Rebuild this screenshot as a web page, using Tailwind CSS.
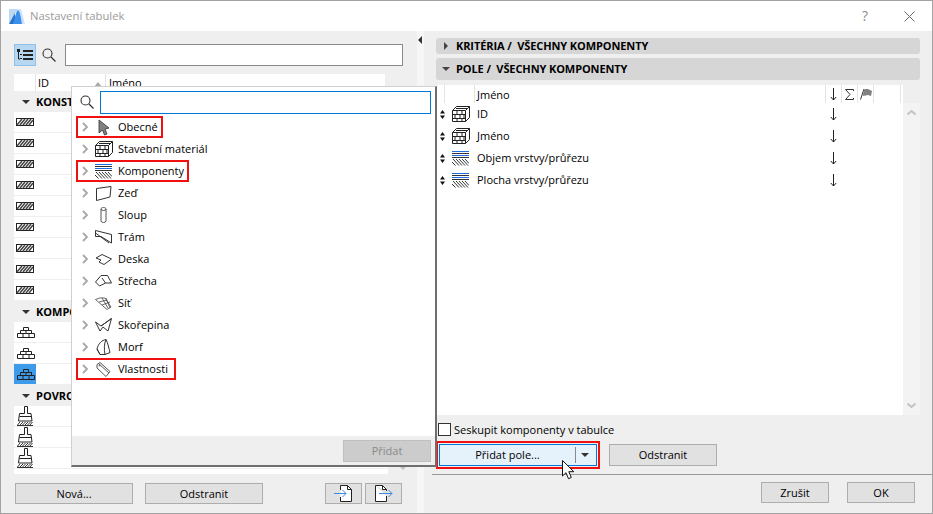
<!DOCTYPE html>
<html lang="cs">
<head>
<meta charset="utf-8">
<title>Nastavení tabulek</title>
<script src="https://cdn.jsdelivr.net/npm/@tailwindcss/browser@4"></script>
</head>
<body class="m-0">
<svg width="0" height="0" class="absolute">
  <defs>
    <symbol id="hatch" viewBox="0 0 18 8">
      <rect x="0.5" y="0.5" width="17" height="7" fill="#fff" stroke="#222"/>
      <path d="M1 7L6 1M4 7L9 1M7 7L12 1M10 7L15 1M13 7L17 2" stroke="#444" stroke-width="1.500" fill="none"/>
    </symbol>
    <symbol id="bricks" viewBox="0 0 18 11">
      <path d="M6.500.500h5v3h-5zM3.500 3.500h11v3h-11zM9 3.500v3M.5 6.500h17v4H.5zM6 6.500v4M12 6.500v4" fill="none" stroke="#222"/>
    </symbol>
    <symbol id="brush" viewBox="0 0 16 20">
      <path d="M7.500.500h3v7h3.500l1 7.500H1.500l1-7.500h5z" fill="#fff" stroke="#222"/>
      <path d="M2.500 10.500h12" stroke="#222"/>
      <path d="M.5 19L3 16M3 19l3-3M5.500 19l3-3M8 19l3-3M10.500 19l3-3M13 19l2.500-3" stroke="#333"/>
      <path d="M0 19.500h16" stroke="#333"/>
    </symbol>
    <symbol id="cube" viewBox="0 0 18 16">
      <path d="M.5 4.500h13v11H.5zM.5 4.500l4-4h13v11l-4 4M13.500 4.500l4-4" fill="#fff" stroke="#222"/>
      <path d="M.5 8.500h13M.5 12.500h13M5 4.500v4M10 4.500v4M3 8.500v4M8 8.500v4M12 8.500v4M5 12.500v3M10 12.500v3M4 2.500h11" stroke="#222" fill="none"/>
    </symbol>
    <symbol id="layers" viewBox="0 0 17 15">
      <path d="M0 .5h17M0 4.500h17" stroke="#1f6be0"/>
      <path d="M0 2.500h17M0 6.500h17" stroke="#333"/>
      <path d="M1 8l6 6.500M4 8l6 6.500M7 8l6 6.500M10 8l6 6.500M13 8l4 4.500M0 11l3.500 3.500" stroke="#333" fill="none"/>
    </symbol>
    <symbol id="chev" viewBox="0 0 7 10">
      <path d="M1 1l4 4-4 4" fill="none" stroke="#a8a8a8" stroke-width="1.800"/>
    </symbol>
    <symbol id="mag" viewBox="0 0 14 14">
      <circle cx="5.500" cy="5.500" r="4.500" fill="none" stroke="#333" stroke-width="1.100"/>
      <path d="M9 9l4.500 4.500" stroke="#333" stroke-width="1.300"/>
    </symbol>
    <symbol id="updown" viewBox="0 0 5 9">
      <path d="M2.500 0L5 3.500H0zM2.500 9L0 5.500h5z" fill="#111"/>
    </symbol>
    <symbol id="down" viewBox="0 0 7 13">
      <path d="M3.500 0v12M.8 9l2.700 3 2.700-3" fill="none" stroke="#222"/>
    </symbol>
  </defs>
</svg>

<div class="w-[933px] h-[514px] overflow-hidden flex flex-col border border-[#a3a3a3] bg-[#efefef] text-[11px] leading-[16px] text-black relative" style="font-family:'Open Sans','Noto Sans',sans-serif">

  <!-- title bar -->
  <div class="h-[30px] shrink-0 bg-white flex items-center">
    <svg class="ml-[8px] w-[16px] h-[16px]" viewBox="0 0 16 16"><path d="M0 1h9L0 16z" fill="#bcd8f5"/><path d="M0 16L6 5v11z" fill="#2a72d0"/><path d="M9 1h3l4 15h-3z" fill="#cfe2f8"/><path d="M4 16C6 10 7 3 9 2c2 1 3 8 4 14z" fill="#3d8fec"/></svg>
    <span class="ml-[5px] w-[97px] text-[#9a9a9a] text-[11.300px]">Nastavení tabulek</span>
    <span class="ml-[735px] text-[#8a8a8a] text-[14px]">?</span>
    <svg class="ml-[36px] w-[11px] h-[11px]" viewBox="0 0 11 11"><path d="M.5.500l10 10M10.500.500l-10 10" stroke="#666" fill="none"/></svg>
  </div>

  <div class="flex-1 flex min-h-0">
    <!-- left column -->
    <div class="w-[416px] shrink-0 pl-[13px] pt-[13px] flex flex-col">
      <div class="flex items-center h-[22px] w-[389px]">
        <div class="w-[22px] h-[22px] bg-[#b5d7f2] border border-[#8fc0e8] flex items-center justify-center">
          <svg class="w-[16px] h-[12px]" viewBox="0 0 16 12"><path d="M0 0h3v3H0zM6 1h10v2H6zM6 5h10v2H6zM6 9h10v2H6zM3 5h2v1H3zM3 9h2v1H3z" fill="#222"/><path d="M1.500 3v7H3" stroke="#222" fill="none"/></svg>
        </div>
        <svg class="ml-[6px] w-[14px] h-[14px]"><use href="#mag"/></svg>
        <div class="ml-[9px] flex-1 h-[22px] bg-white border border-[#8a8a8a]"></div>
      </div>

      <div class="mt-[8px] flex-1 flex min-h-0">
        <div class="w-[374px] flex flex-col">
          <div class="h-[17px] w-[371px] bg-white flex shrink-0 items-center">
            <div class="w-[22px] h-full border-r border-[#e4e4e4]"></div>
            <div class="w-[70px] pl-[2px] h-full border-r border-[#e4e4e4] flex items-center relative">ID<span class="absolute right-[3px] top-[8px] w-0 h-0 border-x-[4px] border-x-transparent border-b-[5px] border-b-[#a8a8a8]"></span></div>
            <div class="pl-[3px]">Jméno</div>
          </div>
          <div class="h-[21px] flex items-center bg-[#efefef] pl-[8px] gap-[6px] font-bold"><span class="w-0 h-0 border-x-[4px] border-x-transparent border-t-[4px] border-t-[#333]"></span>KONST</div>
          <div class="h-[21px] bg-white border-b border-[#efefef] pl-[2px] flex items-center"><svg class="w-[18px] h-[8px]"><use href="#hatch"/></svg></div>
          <div class="h-[21px] bg-white border-b border-[#efefef] pl-[2px] flex items-center"><svg class="w-[18px] h-[8px]"><use href="#hatch"/></svg></div>
          <div class="h-[21px] bg-white border-b border-[#efefef] pl-[2px] flex items-center"><svg class="w-[18px] h-[8px]"><use href="#hatch"/></svg></div>
          <div class="h-[21px] bg-white border-b border-[#efefef] pl-[2px] flex items-center"><svg class="w-[18px] h-[8px]"><use href="#hatch"/></svg></div>
          <div class="h-[21px] bg-white border-b border-[#efefef] pl-[2px] flex items-center"><svg class="w-[18px] h-[8px]"><use href="#hatch"/></svg></div>
          <div class="h-[21px] bg-white border-b border-[#efefef] pl-[2px] flex items-center"><svg class="w-[18px] h-[8px]"><use href="#hatch"/></svg></div>
          <div class="h-[21px] bg-white border-b border-[#efefef] pl-[2px] flex items-center"><svg class="w-[18px] h-[8px]"><use href="#hatch"/></svg></div>
          <div class="h-[21px] bg-white border-b border-[#efefef] pl-[2px] flex items-center"><svg class="w-[18px] h-[8px]"><use href="#hatch"/></svg></div>
          <div class="h-[21px] bg-white border-b border-[#efefef] pl-[2px] flex items-center"><svg class="w-[18px] h-[8px]"><use href="#hatch"/></svg></div>
          <div class="h-[21px] flex items-center bg-[#efefef] pl-[8px] gap-[6px] font-bold"><span class="w-0 h-0 border-x-[4px] border-x-transparent border-t-[4px] border-t-[#333]"></span>KOMPO</div>
          <div class="h-[21px] bg-white border-b border-[#efefef] pl-[3px] flex items-center"><svg class="w-[18px] h-[11px]"><use href="#bricks"/></svg></div>
          <div class="h-[21px] bg-white border-b border-[#efefef] pl-[3px] flex items-center"><svg class="w-[18px] h-[11px]"><use href="#bricks"/></svg></div>
          <div class="h-[21px] bg-white border-b border-[#efefef] flex items-center"><div class="w-[22px] h-[20px] bg-[#3d9be9] pl-[3px] flex items-center"><svg class="w-[18px] h-[11px]"><use href="#bricks"/></svg></div></div>
          <div class="h-[21px] flex items-center bg-[#efefef] pl-[8px] gap-[6px] font-bold"><span class="w-0 h-0 border-x-[4px] border-x-transparent border-t-[4px] border-t-[#333]"></span>POVRC</div>
          <div class="h-[21px] bg-white border-b border-[#efefef] pl-[3px] flex items-center"><svg class="w-[16px] h-[20px]"><use href="#brush"/></svg></div>
          <div class="h-[21px] bg-white border-b border-[#efefef] pl-[3px] flex items-center"><svg class="w-[16px] h-[20px]"><use href="#brush"/></svg></div>
          <div class="h-[21px] bg-white border-b border-[#efefef] pl-[3px] flex items-center"><svg class="w-[16px] h-[20px]"><use href="#brush"/></svg></div>
          <div class="h-[5px] bg-white"></div>
        </div>
        <div class="flex-1 flex flex-col justify-end items-center pb-[4px]">
          <span class="w-0 h-0 border-x-[4px] border-x-transparent border-t-[4px] border-t-[#c4c4c4]"></span>
        </div>
      </div>

      <div class="mt-[9px] mb-[9px] h-[21px] w-[388px] flex shrink-0">
        <button class="ml-[1px] w-[118px] h-[21px] bg-[#e1e1e1] border border-[#adadad]">Nová...</button>
        <button class="ml-[12px] w-[118px] h-[21px] bg-[#e1e1e1] border border-[#adadad]">Odstranit</button>
        <button class="ml-[62px] w-[37px] h-[21px] bg-[#e1e1e1] border border-[#adadad] flex items-center justify-center">
          <svg class="w-[19px] h-[17px]" viewBox="0 0 19 17"><path d="M6.500 5V.500h7l4 4v12h-11V12" fill="#fff" stroke="#222"/><path d="M13.500.500v4h4" fill="none" stroke="#222"/><path d="M0 8.500h12M8.500 5l3.500 3.500L8.500 12" fill="none" stroke="#3c8be0"/></svg>
        </button>
        <button class="ml-[3px] w-[37px] h-[21px] bg-[#e1e1e1] border border-[#adadad] flex items-center justify-center">
          <svg class="w-[19px] h-[17px]" viewBox="0 0 19 17"><path d="M1.500.500h7l4 4V6M12.500 11v5.500h-11V.500" fill="#fff" stroke="#222"/><path d="M8.500.500v4h4" fill="none" stroke="#222"/><path d="M5 8.500h13M14.500 5L18 8.500 14.500 12" fill="none" stroke="#3c8be0"/></svg>
        </button>
      </div>
    </div>

    <!-- splitter -->
    <div class="w-[7px] shrink-0 bg-[#f6f6f6] pt-[5px] pl-[1px]">
      <span class="block w-0 h-0 border-y-[4px] border-y-transparent border-r-[4px] border-r-[#333]"></span>
    </div>

    <!-- right column -->
    <div class="flex-1 min-w-0 pt-[7px] flex flex-col">
      <div class="ml-[12px] mr-[12px] h-[16px] rounded-[3px] bg-[#d6d6d6] flex items-center pl-[8px] gap-[8px] font-bold text-[11px] tracking-[-0.1px]">
        <span class="w-0 h-0 border-y-[4px] border-y-transparent border-l-[4px] border-l-[#444]"></span>KRITÉRIA / &nbsp;VŠECHNY KOMPONENTY
      </div>
      <div class="mt-[4px] ml-[12px] mr-[12px] h-[22px] rounded-[3px] bg-[#d6d6d6] flex items-center pl-[6px] gap-[6px] font-bold text-[11px] tracking-[-0.1px]">
        <span class="w-0 h-0 border-x-[4px] border-x-transparent border-t-[4px] border-t-[#444]"></span>POLE / &nbsp;VŠECHNY KOMPONENTY
      </div>

      <div class="mt-[5px] ml-[13px] mr-[12px] h-[330px] flex">
        <div class="w-[466px] bg-white flex flex-col">
          <div class="h-[18px] flex shrink-0 items-center">
            <div class="w-[7px] h-full"></div>
            <div class="w-[30px] h-full border-l border-[#e4e4e4]"></div>
            <div class="w-[351px] pl-[2px] pt-[1px] h-full border-l border-[#e4e4e4] flex items-center">Jméno</div>
            <div class="w-[16px] h-full border-l border-[#e4e4e4] flex items-center justify-center"><svg class="w-[7px] h-[13px]"><use href="#down"/></svg></div>
            <div class="w-[16px] h-full border-l border-[#e4e4e4] flex items-center justify-center"><svg class="w-[9px] h-[11px]" viewBox="0 0 9 11"><path d="M8.500 2V.500H.5L5 5.500l-4.500 5h8V9" fill="none" stroke="#333"/></svg></div>
            <div class="w-[16px] h-full border-l border-[#e4e4e4] flex items-center justify-center"><svg class="w-[13px] h-[12px]" viewBox="0 0 13 12"><path d="M1.500 11.500L5 1" stroke="#333" fill="none"/><path d="M4.500 2.500L6 1h3l4 2-1 5-3-1-5 1z" fill="#808080"/></svg></div>
            <div class="w-[28px] h-full border-l border-r border-[#e4e4e4]"></div>
          </div>
          <div class="h-[22px] flex items-center">
            <svg class="ml-[3px] w-[5px] h-[9px]"><use href="#updown"/></svg>
            <svg class="ml-[7px] w-[18px] h-[16px]"><use href="#cube"/></svg>
            <span class="ml-[7px] w-[353px]">ID</span>
            <svg class="w-[7px] h-[13px]"><use href="#down"/></svg>
          </div>
          <div class="h-[22px] flex items-center">
            <svg class="ml-[3px] w-[5px] h-[9px]"><use href="#updown"/></svg>
            <svg class="ml-[7px] w-[18px] h-[16px]"><use href="#cube"/></svg>
            <span class="ml-[7px] w-[353px]">Jméno</span>
            <svg class="w-[7px] h-[13px]"><use href="#down"/></svg>
          </div>
          <div class="h-[22px] flex items-center">
            <svg class="ml-[3px] w-[5px] h-[9px]"><use href="#updown"/></svg>
            <svg class="ml-[7px] w-[17px] h-[15px]"><use href="#layers"/></svg>
            <span class="ml-[8px] w-[353px]">Objem vrstvy/průřezu</span>
            <svg class="w-[7px] h-[13px]"><use href="#down"/></svg>
          </div>
          <div class="h-[22px] flex items-center">
            <svg class="ml-[3px] w-[5px] h-[9px]"><use href="#updown"/></svg>
            <svg class="ml-[7px] w-[17px] h-[15px]"><use href="#layers"/></svg>
            <span class="ml-[8px] w-[353px]">Plocha vrstvy/průřezu</span>
            <svg class="w-[7px] h-[13px]"><use href="#down"/></svg>
          </div>
        </div>
        <div class="flex-1 mt-[18px] bg-[#f3f3f3] flex flex-col items-center justify-between py-[7px]">
          <svg class="w-[9px] h-[5px]" viewBox="0 0 9 5"><path d="M.5 4.500L4.500 1l4 3.500" fill="none" stroke="#c4c4c4" stroke-width="2"/></svg>
          <svg class="w-[9px] h-[5px]" viewBox="0 0 9 5"><path d="M.5.500L4.500 4l4-3.500" fill="none" stroke="#c4c4c4" stroke-width="2"/></svg>
        </div>
      </div>

      <div class="mt-[8px] ml-[14px] h-[13px] flex items-center gap-[3px]">
        <span class="w-[13px] h-[13px] bg-white border border-[#333] shrink-0"></span>
        <span>Seskupit komponenty v tabulce</span>
      </div>

      <div class="mt-[8px] ml-[15px] flex h-[22px] items-center">
        <div class="w-[158px] h-[22px] bg-[#e5f1fb] border border-[#0078d7] flex items-center">
          <span class="w-[135px] text-center">Přidat pole...</span>
          <span class="w-px h-[16px] bg-[#8a8a8a]"></span>
          <span class="ml-[5px] w-0 h-0 border-x-[4px] border-x-transparent border-t-[4px] border-t-[#333]"></span>
        </div>
        <button class="ml-[12px] w-[108px] h-[22px] bg-[#e1e1e1] border border-[#adadad]">Odstranit</button>
      </div>

      <div class="mt-[8px] ml-[8px] h-px bg-[#9a9a9a]"></div>

      <div class="mt-[7px] flex">
        <button class="ml-[337px] w-[68px] h-[21px] bg-[#e1e1e1] border border-[#adadad]">Zrušit</button>
        <button class="ml-[18px] w-[68px] h-[21px] bg-[#e1e1e1] border border-[#adadad]">OK</button>
      </div>
    </div>
  </div>

  <!-- red highlight round the button, over the panel -->
  <div class="absolute left-[435px] top-[440px] w-[164px] h-[28px] border-[2px] border-[#f01010] pointer-events-none"></div>

  <!-- cursor -->
  <svg class="absolute left-[561px] top-[459px] w-[13px] h-[20px]" viewBox="0 0 13 20"><path d="M.5.500v15.500l3.500-3.300 2.500 6 2.800-1.200-2.500-5.800h5z" fill="#fff" stroke="#111"/></svg>

  <!-- dropdown popup over the table -->
  <div class="absolute left-[70px] top-[85px] w-[366px] h-[381px] bg-[#efefef] border-t border-l border-t-[#d0d0d0] border-l-[#d0d0d0] border-r-2 border-b-2 border-r-[#6e6e6e] border-b-[#6e6e6e] flex flex-col">
    <div class="h-[29px] bg-white flex items-start pt-[4px] shrink-0 pl-[8px]">
      <svg class="mt-[4px] w-[14px] h-[14px]"><use href="#mag"/></svg>
      <div class="ml-[6px] w-[331px] h-[23px] border border-[#0078d7] bg-white"></div>
    </div>
    <div class="h-[320px] bg-white flex flex-col shrink-0">
      <div class="relative h-[22px] flex items-center pl-[10px]">
        <span class="absolute left-[4px] top-0 w-[87px] h-[22px] border-[2px] border-[#f01010]"></span>
        <svg class="w-[7px] h-[10px]"><use href="#chev"/></svg>
        <span class="w-[29px] flex justify-center"><svg class="w-[12px] h-[17px]" viewBox="0 0 12 17"><path d="M1 1l10 8-4 1 2 5-2.500 1-2-5L1 14z" fill="#808080" stroke="#333" stroke-width=".8"/></svg></span>
        <span>Obecné</span>
      </div>
      <div class="h-[22px] flex items-center pl-[10px]">
        <svg class="w-[7px] h-[10px]"><use href="#chev"/></svg>
        <span class="w-[29px] flex justify-center"><svg class="w-[18px] h-[16px]"><use href="#cube"/></svg></span>
        <span>Stavební materiál</span>
      </div>
      <div class="relative h-[22px] flex items-center pl-[10px]">
        <span class="absolute left-[4px] top-0 w-[113px] h-[22px] border-[2px] border-[#f01010]"></span>
        <svg class="w-[7px] h-[10px]"><use href="#chev"/></svg>
        <span class="w-[29px] flex justify-center"><svg class="w-[17px] h-[15px]"><use href="#layers"/></svg></span>
        <span>Komponenty</span>
      </div>
      <div class="h-[22px] flex items-center pl-[10px]">
        <svg class="w-[7px] h-[10px]"><use href="#chev"/></svg>
        <span class="w-[29px] flex justify-center"><svg class="w-[16px] h-[15px]" viewBox="0 0 16 15"><path d="M.5 2.500L15 .5 14 11 .5 14.500z" fill="#fff" stroke="#333"/></svg></span>
        <span>Zeď</span>
      </div>
      <div class="h-[22px] flex items-center pl-[10px]">
        <svg class="w-[7px] h-[10px]"><use href="#chev"/></svg>
        <span class="w-[29px] flex justify-center"><svg class="w-[7px] h-[16px]" viewBox="0 0 7 16"><path d="M1 2v12c0 2 5 2 5 0V2c0-2-5-2-5 0zM1 2c0 2 5 2 5 0" fill="#fff" stroke="#555"/></svg></span>
        <span>Sloup</span>
      </div>
      <div class="h-[22px] flex items-center pl-[10px]">
        <svg class="w-[7px] h-[10px]"><use href="#chev"/></svg>
        <span class="w-[29px] flex justify-center"><svg class="w-[17px] h-[14px]" viewBox="0 0 17 14"><path d="M.5.500l16 4v8.500L6 6.500H.5zM.5 3L14 13" fill="#fff" stroke="#333"/></svg></span>
        <span>Trám</span>
      </div>
      <div class="h-[22px] flex items-center pl-[10px]">
        <svg class="w-[7px] h-[10px]"><use href="#chev"/></svg>
        <span class="w-[29px] flex justify-center"><svg class="w-[17px] h-[11px]" viewBox="0 0 17 11"><path d="M1 4l6-3.500 9.500 4.500L9 10.500 4 8l2-2z" fill="#fff" stroke="#333"/></svg></span>
        <span>Deska</span>
      </div>
      <div class="h-[22px] flex items-center pl-[10px]">
        <svg class="w-[7px] h-[10px]"><use href="#chev"/></svg>
        <span class="w-[29px] flex justify-center"><svg class="w-[17px] h-[12px]" viewBox="0 0 17 12"><path d="M.5 7L6 .5h6.500L16.500 8l-6 0L7 3M.5 7l4 4 6-3" fill="#fff" stroke="#333"/></svg></span>
        <span>Střecha</span>
      </div>
      <div class="h-[22px] flex items-center pl-[10px]">
        <svg class="w-[7px] h-[10px]"><use href="#chev"/></svg>
        <span class="w-[29px] flex justify-center"><svg class="w-[17px] h-[13px]" viewBox="0 0 17 13"><path d="M.5 2.500Q5 0 10 1l6 9-4 2.500zM4 5l8-2M7 8l8-3M7 1l6 10M11 1l4 10" fill="#fff" stroke="#444" stroke-width=".8"/></svg></span>
        <span>Síť</span>
      </div>
      <div class="h-[22px] flex items-center pl-[10px]">
        <svg class="w-[7px] h-[10px]"><use href="#chev"/></svg>
        <span class="w-[29px] flex justify-center"><svg class="w-[17px] h-[14px]" viewBox="0 0 17 14"><path d="M.5 4L6 8 16.500.5 13 13 8 9l-3 4zM6 8l10.500-7.500" fill="#fff" stroke="#333"/></svg></span>
        <span>Skořepina</span>
      </div>
      <div class="h-[22px] flex items-center pl-[10px]">
        <svg class="w-[7px] h-[10px]"><use href="#chev"/></svg>
        <span class="w-[29px] flex justify-center"><svg class="w-[15px] h-[16px]" viewBox="0 0 15 16"><path d="M1 10C2 5 6 1 10 .5c2 4 3 9 4 13l-5 2H4zM10 .5C8 5 8 10 9 15.500M1 10l3 5.500" fill="#fff" stroke="#333"/></svg></span>
        <span>Morf</span>
      </div>
      <div class="relative h-[22px] flex items-center pl-[10px]">
        <span class="absolute left-[4px] top-0 w-[100px] h-[22px] border-[2px] border-[#f01010]"></span>
        <svg class="w-[7px] h-[10px]"><use href="#chev"/></svg>
        <span class="w-[29px] flex justify-center"><svg class="w-[15px] h-[15px]" viewBox="0 0 15 15"><path d="M1 2.500L4 .5l10 9-4 5L1 6zM3 2l10 9" fill="#fff" stroke="#555"/><circle cx="3.500" cy="3.500" r="1" fill="#777"/></svg></span>
        <span>Vlastnosti</span>
      </div>
    </div>
    <div class="flex-1 flex justify-end items-center pr-[4px]">
      <button class="w-[88px] h-[22px] bg-[#cccccc] border border-[#bfbfbf] text-[#8a8a8a]">Přidat</button>
    </div>
  </div>
</div>
</body>
</html>
